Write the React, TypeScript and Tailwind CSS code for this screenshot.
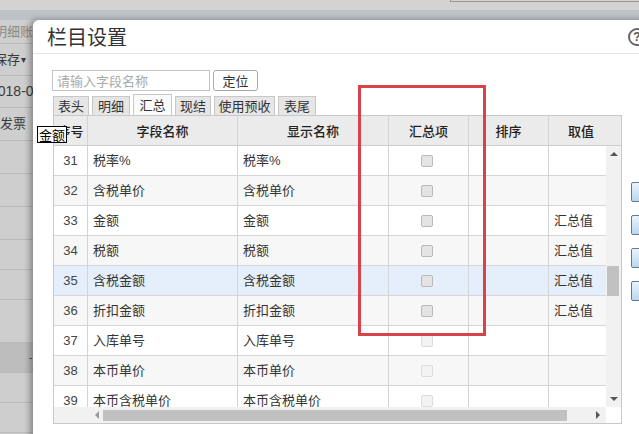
import React from 'react';

type Row = { n: number; f: string; v: string; hl?: boolean; dis?: boolean };

const rows: Row[] = [
  { n: 31, f: '税率%', v: '' },
  { n: 32, f: '含税单价', v: '' },
  { n: 33, f: '金额', v: '汇总值' },
  { n: 34, f: '税额', v: '汇总值' },
  { n: 35, f: '含税金额', v: '汇总值', hl: true },
  { n: 36, f: '折扣金额', v: '汇总值' },
  { n: 37, f: '入库单号', v: '', dis: true },
  { n: 38, f: '本币单价', v: '', dis: true },
  { n: 39, f: '本币含税单价', v: '', dis: true },
];

const tabs = [
  { t: '表头', w: 'w-[36px]' },
  { t: '明细', w: 'w-[38px]' },
  { t: '汇总', w: 'w-[39px]', active: true },
  { t: '现结', w: 'w-[36px]' },
  { t: '使用预收', w: 'w-[61px]' },
  { t: '表尾', w: 'w-[38px]' },
];

function BgRow({ h, children, dark }: { h: string; children?: React.ReactNode; dark?: boolean }) {
  return (
    <div
      className={`${h} flex items-center border-b border-[#b9b9b9] whitespace-nowrap text-[13px] text-[#3a3a3a] ${
        dark ? 'bg-[#bdbdbd]' : ''
      }`}
    >
      {children}
    </div>
  );
}

export default function App() {
  return (
    <div className="relative w-[639px] h-[434px] overflow-hidden bg-[#cecece] font-['Liberation_Sans','Noto_Sans_CJK_SC',sans-serif]">
      {/* top strips */}
      <div className="h-[10px] bg-[#d3d3d3] flex justify-end">
        <div className="w-[189px] h-[2px] border-l border-b border-[#9a9a9a]" />
      </div>
      <div className="h-[10px] bg-[#bdc1c8]" />

      {/* background left column */}
      <div className="w-[33px] flex flex-col overflow-hidden">
        <BgRow h="h-[24px]">
          <span className="shrink-0 -ml-[6px] text-[#8a8a8a]">明细账</span>
        </BgRow>
        <BgRow h="h-[32px]">
          <span className="shrink-0 -ml-[6px]">保存</span>
          <span className="shrink-0 text-[10px] ml-[1px]">▾</span>
        </BgRow>
        <BgRow h="h-[32px]">
          <span className="shrink-0 -ml-[10px] text-[14px]">2018-07</span>
        </BgRow>
        <BgRow h="h-[33px]">
          <span className="shrink-0">发票</span>
        </BgRow>
        <BgRow h="h-[33px]" />
        <BgRow h="h-[33px]" />
        <BgRow h="h-[33px]" />
        <BgRow h="h-[30px]" />
        <BgRow h="h-[30px]" />
        <BgRow h="h-[43px]" />
        <BgRow h="h-[30px]" dark>
          <span className="ml-[29px] text-[10px] text-[#444]">-</span>
        </BgRow>
        <BgRow h="h-[30px]" />
        <BgRow h="h-[30px]" />
      </div>

      {/* dialog */}
      <div className="absolute left-[33px] top-[20px] w-[640px] h-[430px] bg-white rounded-tl-[6px] shadow-[-3px_0_6px_rgba(0,0,0,0.35)] flex flex-col">
        <div className="h-[34px] shrink-0 border-b border-[#e5e5e5] flex items-center pl-[14px]">
          <span className="w-[80px] text-[20px] text-[#333] font-['Noto_Sans_CJK_SC',sans-serif] leading-none">栏目设置</span>
          <span className="ml-[501px] shrink-0 w-[18px] h-[18px] rounded-full border-[2px] border-[#666] text-[#555] text-[12px] font-bold flex items-center justify-center leading-none">
            ?
          </span>
        </div>

        <div className="flex pl-[19px] pt-[16px]">
          <div className="flex flex-col">
            {/* search */}
            <div className="flex items-center gap-[3px] h-[21px]">
              <input
                placeholder="请输入字段名称"
                className="w-[158px] h-[21px] border border-[#c4c4c4] px-[4px] text-[13px] text-[#333] placeholder:text-[#aaaaaa] outline-none font-['Noto_Sans_CJK_SC',sans-serif]"
              />
              <button className="w-[45px] h-[21px] border border-[#a9a9a9] rounded-[3px] bg-white text-[13px] text-[#333] leading-none font-['Noto_Sans_CJK_SC',sans-serif]">
                定位
              </button>
            </div>

            {/* tabs */}
            <div className="mt-[3px] ml-[1px] flex items-end gap-[3px] h-[21px]">
              {tabs.map((t) => (
                <div
                  key={t.t}
                  className={`${t.w} flex items-center justify-center text-[13px] text-[#333] border border-b-0 border-[#c8c8c8] font-['Noto_Sans_CJK_SC',sans-serif] ${
                    t.active ? 'h-[21px] bg-[#fafafa]' : 'h-[19px] bg-[#e6e6e6]'
                  }`}
                >
                  {t.t}
                </div>
              ))}
            </div>

            {/* table */}
            <div className="ml-[1px] w-[569px] border border-[#c8c8c8] flex flex-col text-[13px] text-[#333]">
              {/* header */}
              <div className="h-[30px] flex bg-[#ebebeb] border-b border-[#cfcfcf] font-['Noto_Sans_CJK_SC',sans-serif] font-medium text-[#222]">
                <div className="w-[34px] border-r border-[#d4d4d4] flex items-center justify-center">序号</div>
                <div className="w-[150px] border-r border-[#d4d4d4] flex items-center justify-center">字段名称</div>
                <div className="w-[151px] border-r border-[#d4d4d4] flex items-center justify-center">显示名称</div>
                <div className="w-[80px] border-r border-[#d4d4d4] flex items-center justify-center">汇总项</div>
                <div className="w-[80px] border-r border-[#d4d4d4] flex items-center justify-center">排序</div>
                <div className="flex-1 flex items-center justify-center pr-[8px]">取值</div>
              </div>

              {/* body */}
              <div className="flex h-[261px]">
                <div className="w-[552px] overflow-hidden">
                  {rows.map((r, i) => (
                    <div
                      key={r.n}
                      className={`h-[30px] flex border-b border-[#d6d6d6] ${
                        r.hl ? 'bg-[#e4effb]' : i % 2 === 1 ? 'bg-[#f7f7f7]' : 'bg-white'
                      }`}
                    >
                      <div className="w-[34px] shrink-0 border-r border-[#d4d4d4] flex items-center justify-center text-[#444]">
                        {r.n}
                      </div>
                      <div className="w-[150px] shrink-0 border-r border-[#d4d4d4] flex items-center pl-[5px]">
                        {r.f}
                      </div>
                      <div className="w-[151px] shrink-0 border-r border-[#d4d4d4] flex items-center pl-[5px]">
                        {r.f}
                      </div>
                      <div className="w-[80px] shrink-0 border-r border-[#d4d4d4] flex items-center justify-center pr-[4px]">
                        <span
                          className={`w-[12px] h-[12px] rounded-[2px] border ${
                            r.dis ? 'border-[#dcdcdc] bg-[#f3f3f3]' : 'border-[#b9b9b9] bg-[#e4e4e4]'
                          }`}
                        />
                      </div>
                      <div className="w-[80px] shrink-0 border-r border-[#d4d4d4]" />
                      <div className="w-[57px] shrink-0 flex items-center pl-[5px]">{r.v}</div>
                    </div>
                  ))}
                </div>
                {/* vertical scrollbar */}
                <div className="flex-1 bg-[#f1f1f1] flex flex-col items-center justify-between py-[6px] relative">
                  <span className="w-0 h-0 border-l-[4px] border-r-[4px] border-b-[4px] border-l-transparent border-r-transparent border-b-[#555]" />
                  <span className="w-0 h-0 border-l-[4px] border-r-[4px] border-t-[4px] border-l-transparent border-r-transparent border-t-[#555]" />
                  <div className="absolute left-[1px] right-[2px] top-[120px] h-[30px] bg-[#c1c1c1]" />
                </div>
              </div>

              {/* horizontal scrollbar */}
              <div className="h-[16px] flex">
                <div className="w-[552px] bg-[#f1f1f1] flex items-center">
                  <span className="ml-[41px] w-0 h-0 border-t-[4px] border-b-[4px] border-r-[4px] border-t-transparent border-b-transparent border-r-[#999]" />
                  <div className="ml-[4px] w-[464px] h-[11px] bg-[#c1c1c1]" />
                  <span className="ml-[29px] w-0 h-0 border-t-[4px] border-b-[4px] border-l-[4px] border-t-transparent border-b-transparent border-l-[#555]" />
                </div>
                <div className="flex-1 bg-white" />
              </div>
            </div>
          </div>

          {/* right-side buttons */}
          <div className="ml-[9px] flex flex-col gap-[13px] pt-[112px]">
            {[0, 1, 2, 3].map((k) => (
              <div
                key={k}
                className="w-[22px] h-[20px] border border-[#5f7d92] rounded-[2px] bg-gradient-to-b from-[#eaf3fb] to-[#bcd7ee]"
              />
            ))}
          </div>
        </div>
      </div>

      {/* tooltip */}
      <div className="absolute left-[37px] top-[126px] h-[17px] px-[1px] bg-white border border-black text-[13px] leading-[15px] text-black font-['Noto_Sans_CJK_SC',sans-serif]">
        金额
      </div>

      {/* red highlight box */}
      <div className="absolute left-[358px] top-[85px] w-[128px] h-[251px] border-[3px] border-[#d8434a]" />
    </div>
  );
}
